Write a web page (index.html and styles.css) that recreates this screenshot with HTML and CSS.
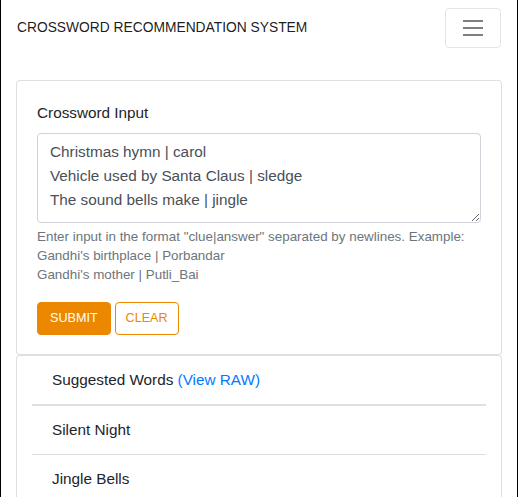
FILE: index.html
```html
<!DOCTYPE html>
<html>
<head>
<meta charset="utf-8">
<link rel="stylesheet" href="styles.css">
</head>
<body>
<div class="frame">
  <nav class="navbar">
    <span class="brand">CROSSWORD RECOMMENDATION SYSTEM</span>
    <button class="toggler" type="button" aria-label="Toggle navigation">
      <svg width="30" height="30" viewBox="0 0 30 30"><path d="M5 8h20M5 15h20M5 22h20" stroke="rgba(0,0,0,0.5)" stroke-width="2" stroke-linecap="butt" fill="none"/></svg>
    </button>
  </nav>
  <main class="container">
    <section class="card input-card">
      <label class="label" for="clues">Crossword Input</label>
      <textarea id="clues" class="textarea">Christmas hymn | carol
Vehicle used by Santa Claus | sledge
The sound bells make | jingle</textarea>
      <div class="help">Enter input in the format "clue|answer" separated by newlines. Example:<br>Gandhi's birthplace | Porbandar<br>Gandhi's mother | Putli_Bai</div>
      <div class="actions">
        <button class="btn btn-primary" type="button">SUBMIT</button>
        <button class="btn btn-outline" type="button">CLEAR</button>
      </div>
    </section>
    <section class="card list-card">
      <ul class="list">
        <li class="item item-head">Suggested Words <a class="raw" href="#">(View RAW)</a></li>
        <li class="item">Silent Night</li>
        <li class="item">Jingle Bells</li>
      </ul>
    </section>
  </main>
</div>
</body>
</html>
```
FILE: styles.css
```css
* { box-sizing: border-box; }
html, body { margin: 0; padding: 0; }
body {
  font-family: "Liberation Sans", Arial, sans-serif;
  font-size: 15.3px;
  line-height: 24px;
  color: #212529;
  background: #fff;
}
.frame {
  border-left: 1px solid #000;
  border-right: 1px solid #000;
  min-height: 497px;
}
.navbar {
  display: flex;
  align-items: center;
  justify-content: space-between;
  padding: 8px 16px;
}
.brand {
  font-size: 13.8px;
  color: rgba(0,0,0,0.9);
}
.toggler {
  width: 56px;
  height: 40px;
  padding: 0;
  display: flex;
  align-items: center;
  justify-content: center;
  background: transparent;
  border: 1px solid rgba(0,0,0,0.1);
  border-radius: 4px;
}
.toggler svg { display: block; }
.container {
  padding: 24px 15px 0;
}
.card {
  border: 1px solid rgba(0,0,0,0.125);
  border-radius: 4px;
  background: #fff;
}
.input-card {
  padding: 20px 20px 19px;
  display: flex;
  flex-direction: column;
}
.label {
  display: block;
  margin-bottom: 8px;
}
.textarea {
  display: block;
  width: 100%;
  height: 90px;
  padding: 6px 12px;
  font: inherit;
  color: #495057;
  border: 1px solid #ced4da;
  border-radius: 4px;
  resize: vertical;
}
.help {
  margin-top: 4px;
  font-size: 13.4px;
  line-height: 19.2px;
  color: #6c757d;
}
.actions {
  margin-top: 17px;
  display: flex;
  gap: 4px;
}
.btn {
  height: 33px;
  padding: 0 13px;
  font-family: inherit;
  font-size: 12.6px;
  border-radius: 4px;
  border: 1px solid #ec8700;
  cursor: pointer;
}
.btn-primary {
  background: #ec8700;
  color: #fff;
  padding: 0 12px;
}
.btn-outline {
  background: #fff;
  color: #ec8700;
  padding: 0 10px;
}
.list-card {
  padding: 0 15px;
}
.list {
  list-style: none;
  margin: 0;
  padding: 0;
}
.item {
  padding: 12px 20px;
  border-top: 1px solid rgba(0,0,0,0.125);
}
.item:first-child { border-top: 0; }
.item-head { border-bottom: 1px solid rgba(0,0,0,0.125); }
.raw { color: #007bff; text-decoration: none; }
```
